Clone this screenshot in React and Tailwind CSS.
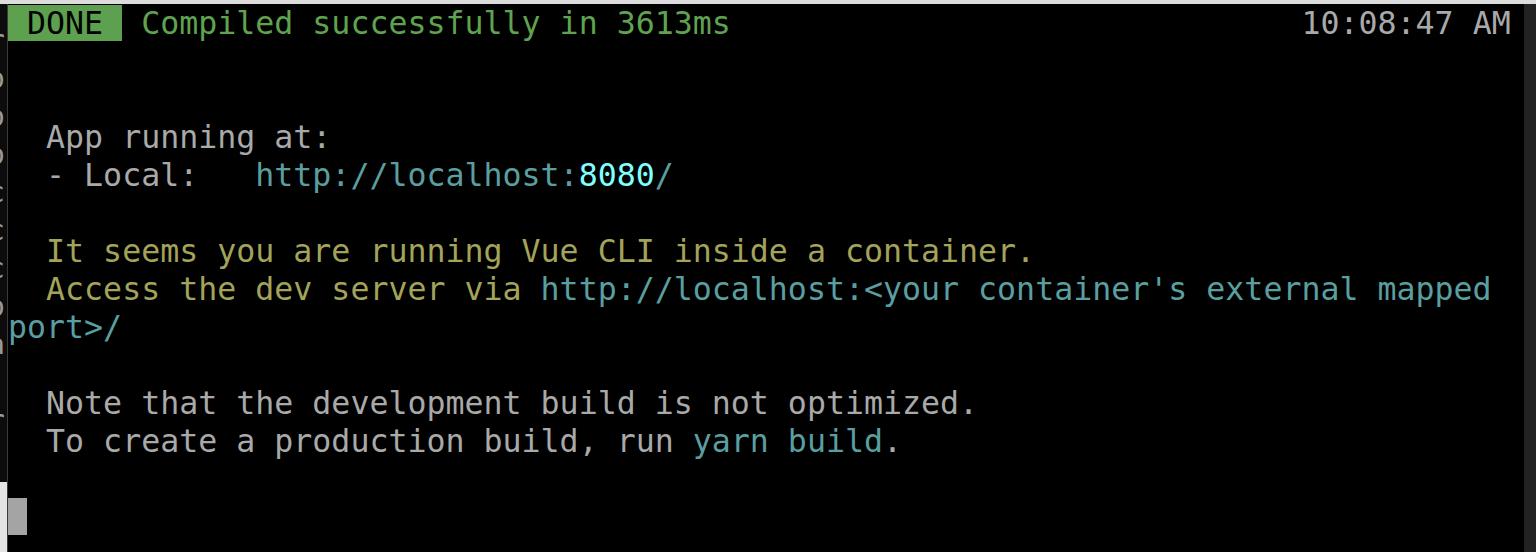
const mono = { fontFamily: '"DejaVu Sans Mono", "Liberation Mono", monospace' };

const Line = ({ children }) => (
  <div className="h-[38px] whitespace-pre">{children}</div>
);

const App = () => {
  return (
    <div className="w-[1536px] h-[552px] flex flex-col bg-[#dcdcdc] overflow-hidden">
      <div className="h-[4px] bg-[#dcdcdc]" />
      <div className="flex flex-1 min-h-0">
        {/* window peeking behind on the left */}
        <div className="w-[8px] flex flex-col border-r border-[#3a3a3a] bg-[#0c0c0c] overflow-hidden">
          <div
            className="flex-1 text-[#9a9a9a] text-[28px] leading-[38px] whitespace-pre -ml-[12px] pt-[18px]"
            style={mono}
            aria-hidden="true"
          >
            {'r\no\no\no\nc\nc\nc\no\na\n:\nr\n'}
          </div>
          <div className="h-[70px] bg-[#e4e4e4]" />
        </div>

        {/* terminal */}
        <div
          className="flex-1 bg-black text-[31.6px] leading-[38px] text-[#a9a9a9]"
          style={mono}
        >
          <Line>
            <span className="bg-[#5da04f] text-black"> DONE </span>
            <span className="text-[#5fa350]"> Compiled successfully in 3613ms</span>
            {'                           '}
            <span>   10:08:47 AM</span>
          </Line>
          <Line />
          <Line />
          <Line>  App running at:</Line>
          <Line>
            {'  - Local:   '}
            <span className="text-[#5a9fa0]">http://localhost:</span>
            <span className="text-[#80ffff]">8080</span>
            <span className="text-[#5a9fa0]">/</span>
          </Line>
          <Line />
          <Line>
            <span className="text-[#a3a35a]">  It seems you are running Vue CLI inside a container.</span>
          </Line>
          <Line>
            <span className="text-[#a3a35a]">  Access the dev server via </span>
            <span className="text-[#5a9fa0]">http://localhost:&lt;your container's external mapped</span>
          </Line>
          <Line>
            <span className="text-[#5a9fa0]">port&gt;/</span>
          </Line>
          <Line />
          <Line>  Note that the development build is not optimized.</Line>
          <Line>
            {'  To create a production build, run '}
            <span className="text-[#5a9fa0]">yarn build</span>
            .
          </Line>
          <Line />
          <div className="h-[37px] w-[19px] bg-[#a4a4a4]" />
        </div>

        <div className="w-[12px] bg-[#222222]" />
      </div>
    </div>
  );
};

export default App;
